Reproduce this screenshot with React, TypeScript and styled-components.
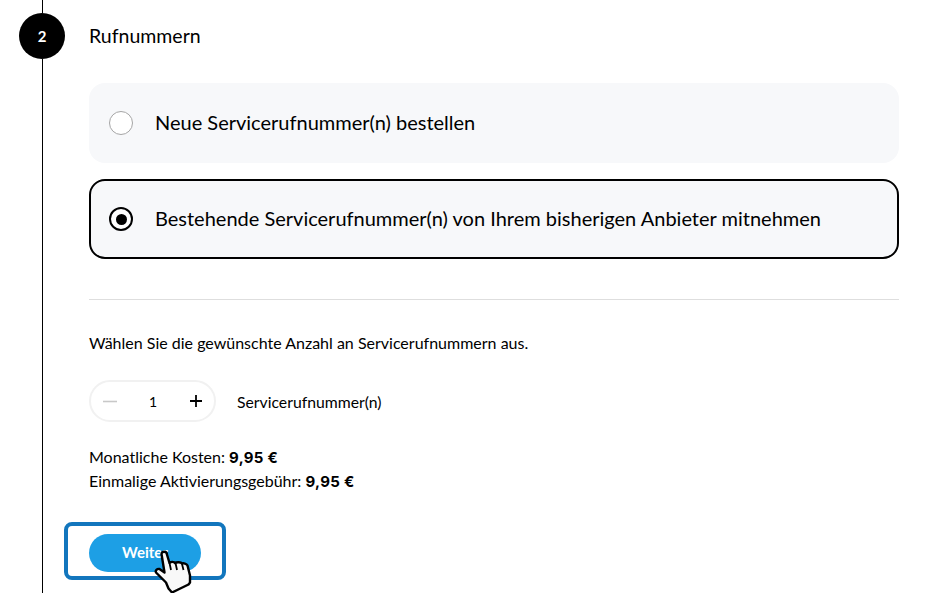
import React from 'react';
import styled, { createGlobalStyle } from 'styled-components';

const GlobalStyle = createGlobalStyle`
    html, body {
        margin: 0;
        padding: 0;
        height: 593px;
        overflow: hidden;
        background: #fff;
    }
    body {
        font-family: 'Lato', 'Liberation Sans', sans-serif;
        color: #000;
    }
`;

const Page = styled.div`
    width: 945px;
    height: 593px;
    display: flex;
    overflow: hidden;
`;

const Rail = styled.div`
    width: 46px;
    margin-left: 19px;
    display: flex;
    flex-direction: column;
    align-items: center;
`;

const RailLine = styled.div<{ $grow?: boolean }>`
    width: 1px;
    margin-left: 1px;
    background: #000;
    height: 13px;
    flex: ${(p) => (p.$grow ? 1 : 'none')};
`;

const StepCircle = styled.div`
    width: 46px;
    height: 46px;
    flex: none;
    border-radius: 50%;
    background: #000;
    color: #fff;
    font-size: 15px;
    font-weight: 700;
    display: flex;
    align-items: center;
    justify-content: center;
`;

const Content = styled.div`
    width: 810px;
    margin-left: 24px;
    display: flex;
    flex-direction: column;
`;

const Title = styled.h2`
    margin: 24px 0 0;
    font-size: 19.5px;
    line-height: 24px;
    font-weight: 400;
`;

const Options = styled.div`
    margin-top: 35px;
    display: flex;
    flex-direction: column;
    gap: 16px;
`;

const OptionCard = styled.div<{ $selected?: boolean }>`
    height: 80px;
    box-sizing: border-box;
    display: flex;
    align-items: center;
    gap: 22px;
    padding-left: ${(p) => (p.$selected ? '18px' : '20px')};
    background: #f7f8fa;
    border-radius: 16px;
    border: ${(p) => (p.$selected ? '2px solid #000' : 'none')};
    font-size: 20px;
`;

const OptionText = styled.span`
    padding-bottom: 2px;
`;

const Radio = styled.span<{ $selected?: boolean }>`
    width: 24px;
    height: 24px;
    flex: none;
    box-sizing: border-box;
    border-radius: 50%;
    background: #fff;
    border: ${(p) => (p.$selected ? '2px solid #000' : '1.5px solid #a5a5a5')};
    display: flex;
    align-items: center;
    justify-content: center;
    &::after {
        content: '';
        display: ${(p) => (p.$selected ? 'block' : 'none')};
        width: 11px;
        height: 11px;
        border-radius: 50%;
        background: #000;
    }
`;

const Divider = styled.hr`
    margin: 40px 0 0;
    border: none;
    border-top: 1px solid #dedede;
`;

const Hint = styled.p`
    margin: 33px 0 0;
    font-size: 16px;
    line-height: 20px;
`;

const QuantityRow = styled.div`
    margin-top: 27px;
    display: flex;
    align-items: center;
    gap: 21px;
`;

const Stepper = styled.div`
    width: 127px;
    height: 42px;
    box-sizing: border-box;
    border: 2px solid #f1f1f1;
    border-radius: 21px;
    display: flex;
    align-items: center;
    justify-content: space-between;
    padding: 0 10px 0 11px;
    font-size: 14px;
`;

const StepButton = styled.span<{ $disabled?: boolean }>`
    width: 16px;
    height: 16px;
    display: flex;
    color: ${(p) => (p.$disabled ? '#c8c8c8' : '#000')};
`;

const UnitLabel = styled.span`
    font-size: 15.75px;
`;

const Costs = styled.div`
    margin-top: 23px;
    font-size: 16px;
    line-height: 24px;
`;

const Amount = styled.b`
    font-family: 'Inter', 'Liberation Sans', sans-serif;
    font-size: 15px;
    font-weight: 700;
    line-height: 1;
    letter-spacing: 0.3px;
`;

const FocusRing = styled.div`
    position: relative;
    margin: 29px 0 0 -25px;
    width: 162px;
    height: 58px;
    box-sizing: border-box;
    border: 4px solid #1276bd;
    border-radius: 8px;
    display: flex;
    align-items: center;
    padding: 4px 0 0 21px;
`;

const PrimaryButton = styled.button`
    width: 112px;
    height: 38px;
    border: none;
    border-radius: 19px;
    background: #1d9fe5;
    color: #fff;
    font-family: inherit;
    font-size: 15px;
    font-weight: 700;
    padding: 0 6px 2px;
`;

const Cursor = styled.svg`
    position: absolute;
    left: 82px;
    top: 22px;
    width: 45px;
    height: 45px;
`;

const MinusIcon = () => (
    <svg viewBox="0 0 16 16" width="16" height="16">
        <path d="M1 8.5h14" stroke="currentColor" strokeWidth="1.6" />
    </svg>
);

const PlusIcon = () => (
    <svg viewBox="0 0 16 16" width="16" height="16">
        <path d="M2 8h12M8 2v12" stroke="currentColor" strokeWidth="1.8" />
    </svg>
);

const App: React.FC = () => {
    return (
        <Page>
            <GlobalStyle />
            <Rail>
                <RailLine />
                <StepCircle>2</StepCircle>
                <RailLine $grow />
            </Rail>
            <Content>
                <Title>Rufnummern</Title>
                <Options>
                    <OptionCard>
                        <Radio />
                        <OptionText>Neue Servicerufnummer(n) bestellen</OptionText>
                    </OptionCard>
                    <OptionCard $selected>
                        <Radio $selected />
                        <OptionText>Bestehende Servicerufnummer(n) von Ihrem bisherigen Anbieter mitnehmen</OptionText>
                    </OptionCard>
                </Options>
                <Divider />
                <Hint>Wählen Sie die gewünschte Anzahl an Servicerufnummern aus.</Hint>
                <QuantityRow>
                    <Stepper>
                        <StepButton $disabled>
                            <MinusIcon />
                        </StepButton>
                        1
                        <StepButton>
                            <PlusIcon />
                        </StepButton>
                    </Stepper>
                    <UnitLabel>Servicerufnummer(n)</UnitLabel>
                </QuantityRow>
                <Costs>
                    Monatliche Kosten: <Amount>9,95 €</Amount>
                    <br />
                    Einmalige Aktivierungsgebühr: <Amount>9,95 €</Amount>
                </Costs>
                <FocusRing>
                    <PrimaryButton>Weiter</PrimaryButton>
                    <Cursor viewBox="0 0 45 45">
                        <path
                            d="M11.500 6c0-3 5-3 5.300 0l2.700 9c1.500-1.500 4.500-1.500 5.500 0 1.500-1 6-1 7 .5 1.500-.5 4.500 0 5.500 2l2.500 10v7l-1.500 2-16.500 8-3.500-4-2.500-6-10-10c-1-2 1-4 3.500-3.500l5 3.500z"
                            fill="#f8f8f8"
                            stroke="#000"
                            strokeWidth="2.4"
                            strokeLinejoin="round"
                        />
                        <path d="M19.500 15l1.500 7M25.500 15l1.500 7M32 16l1.500 6" stroke="#000" strokeWidth="1.8" fill="none" />
                    </Cursor>
                </FocusRing>
            </Content>
        </Page>
    );
};

export default App;
